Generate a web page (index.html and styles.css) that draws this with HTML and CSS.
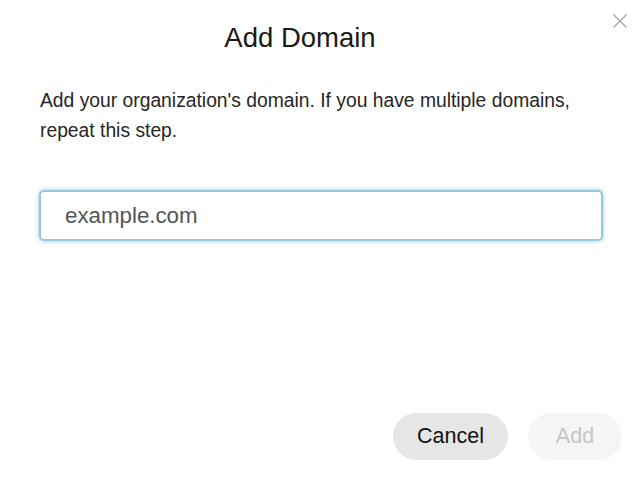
FILE: index.html
```html
<!DOCTYPE html>
<html lang="en">
<head>
<meta charset="utf-8">
<title>Add Domain</title>
<link rel="stylesheet" href="styles.css">
</head>
<body>
<div class="modal">
  <button class="close" aria-label="Close">
    <svg width="16" height="16" viewBox="0 0 16 16"><path d="M1.5 1.5L14.5 14.5M14.5 1.5L1.5 14.5" stroke="#a0a0a0" stroke-width="1.1" fill="none"/></svg>
  </button>
  <header class="header">
    <h1 class="title">Add Domain</h1>
  </header>
  <div class="body">
    <p class="desc">Add your organization's domain. If you have multiple domains, repeat this step.</p>
    <input class="field" type="text" placeholder="example.com">
  </div>
  <footer class="footer">
    <button class="btn btn-cancel">Cancel</button>
    <button class="btn btn-add" disabled>Add</button>
  </footer>
</div>
</body>
</html>
```
FILE: styles.css
```css
html, body {
  margin: 0;
  padding: 0;
  background: #ffffff;
}
body {
  font-family: "Liberation Sans", Arial, sans-serif;
  color: #1f1f1f;
}
.modal {
  position: relative;
  width: 644px;
  height: 479px;
  display: flex;
  flex-direction: column;
}
.close {
  position: absolute;
  top: 13px;
  right: 16px;
  width: 16px;
  height: 16px;
  padding: 0;
  border: 0;
  background: transparent;
  display: flex;
}
.header {
  height: 76px;
  padding-right: 44px;
  display: flex;
  align-items: center;
  justify-content: center;
}
.title {
  margin: 0;
  font-size: 27.5px;
  font-weight: 400;
  color: #1a1a1a;
}
.body {
  padding: 10px 41px 0 40px;
  display: flex;
  flex-direction: column;
}
.desc {
  margin: 0;
  font-size: 19.3px;
  line-height: 30px;
  color: #262626;
}
.field {
  margin: 44px 0 0 -1px;
  height: 51px;
  box-sizing: border-box;
  border: 2px solid #98c8e0;
  border-radius: 5px;
  box-shadow: 0 0 4px rgba(110, 170, 210, 0.7);
  padding: 0 22px 0 24px;
  font-family: inherit;
  font-size: 22.3px;
  color: #545454;
  outline: none;
}
.field::placeholder {
  color: #545454;
}
.footer {
  margin-top: auto;
  padding: 0 22px 19px 0;
  display: flex;
  justify-content: flex-end;
  gap: 20px;
}
.btn {
  height: 47px;
  border: 0;
  border-radius: 24px;
  font-family: inherit;
  font-size: 21.5px;
  padding: 0;
}
.btn-cancel {
  width: 115px;
  background: #e6e6e6;
  color: #121212;
}
.btn-add {
  width: 94px;
  background: #f5f5f5;
  color: #c6c6c6;
}
```
